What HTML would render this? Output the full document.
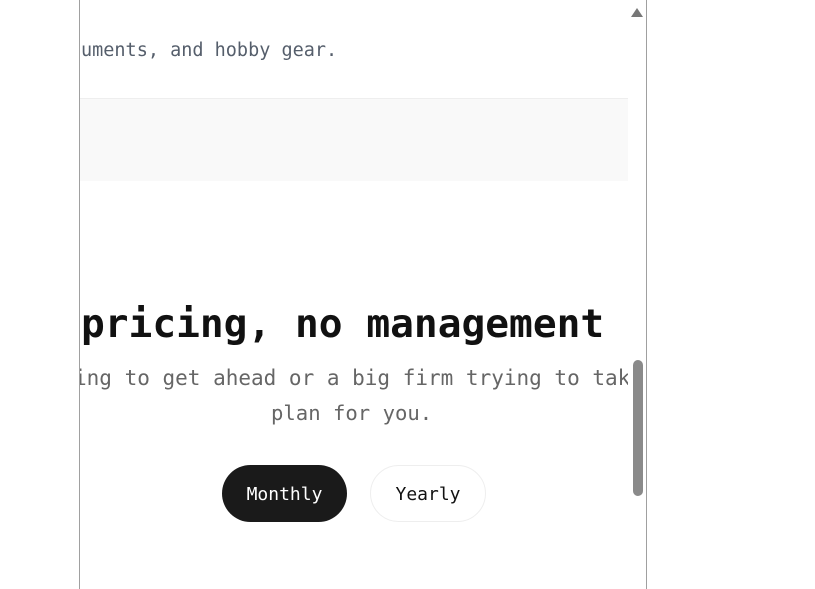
<!DOCTYPE html>
<html><head><style>
body{margin:0;width:815px;height:578px;background:#fff;position:relative;overflow:hidden;font-family:"DejaVu Sans Mono","Liberation Mono",monospace}
.frame{position:absolute;left:79px;top:-1px;width:566px;height:590px;border-left:1px solid #a0a0a0;border-right:1px solid #a0a0a0;overflow:hidden;background:#fff}
.t{position:absolute;white-space:nowrap}
.sb{position:absolute;left:548px;top:0;width:18px;height:590px;background:#fff;z-index:5}
</style></head><body>
<div class="frame">
 <div class="t" style="left:1px;top:41px;font-size:18.5px;color:#555e6b">uments, and hobby gear.</div>
 <div style="position:absolute;left:0;top:99px;width:548px;height:82px;background:#f9f9f9;border-top:1px solid #eee"></div>
 <div class="t" style="left:1px;top:302px;font-size:39.5px;font-weight:bold;color:#111">pricing, no management</div>
 <div class="t" style="left:-6px;top:367px;font-size:21px;color:#666">ing to get ahead or a big firm trying to take</div>
 <div class="t" style="left:191px;top:402px;font-size:20.6px;color:#666">plan for you.</div>
 <div style="position:absolute;left:142px;top:466px;width:125px;height:57px;border-radius:29px;background:#1a1a1a;color:#fff;font-size:18px;line-height:59px;text-align:center">Monthly</div>
 <div style="position:absolute;left:290px;top:466px;width:114px;height:55px;border-radius:29px;border:1px solid #eee;color:#111;font-size:18px;line-height:57px;text-align:center">Yearly</div>
 <div class="sb">
  <div style="position:absolute;left:3px;top:9px;width:0;height:0;border-left:6px solid transparent;border-right:6px solid transparent;border-bottom:9px solid #777"></div>
  <div style="position:absolute;left:5px;top:361px;width:10px;height:136px;border-radius:5px;background:#8a8a8a"></div>
 </div>
</div>
</body></html>
